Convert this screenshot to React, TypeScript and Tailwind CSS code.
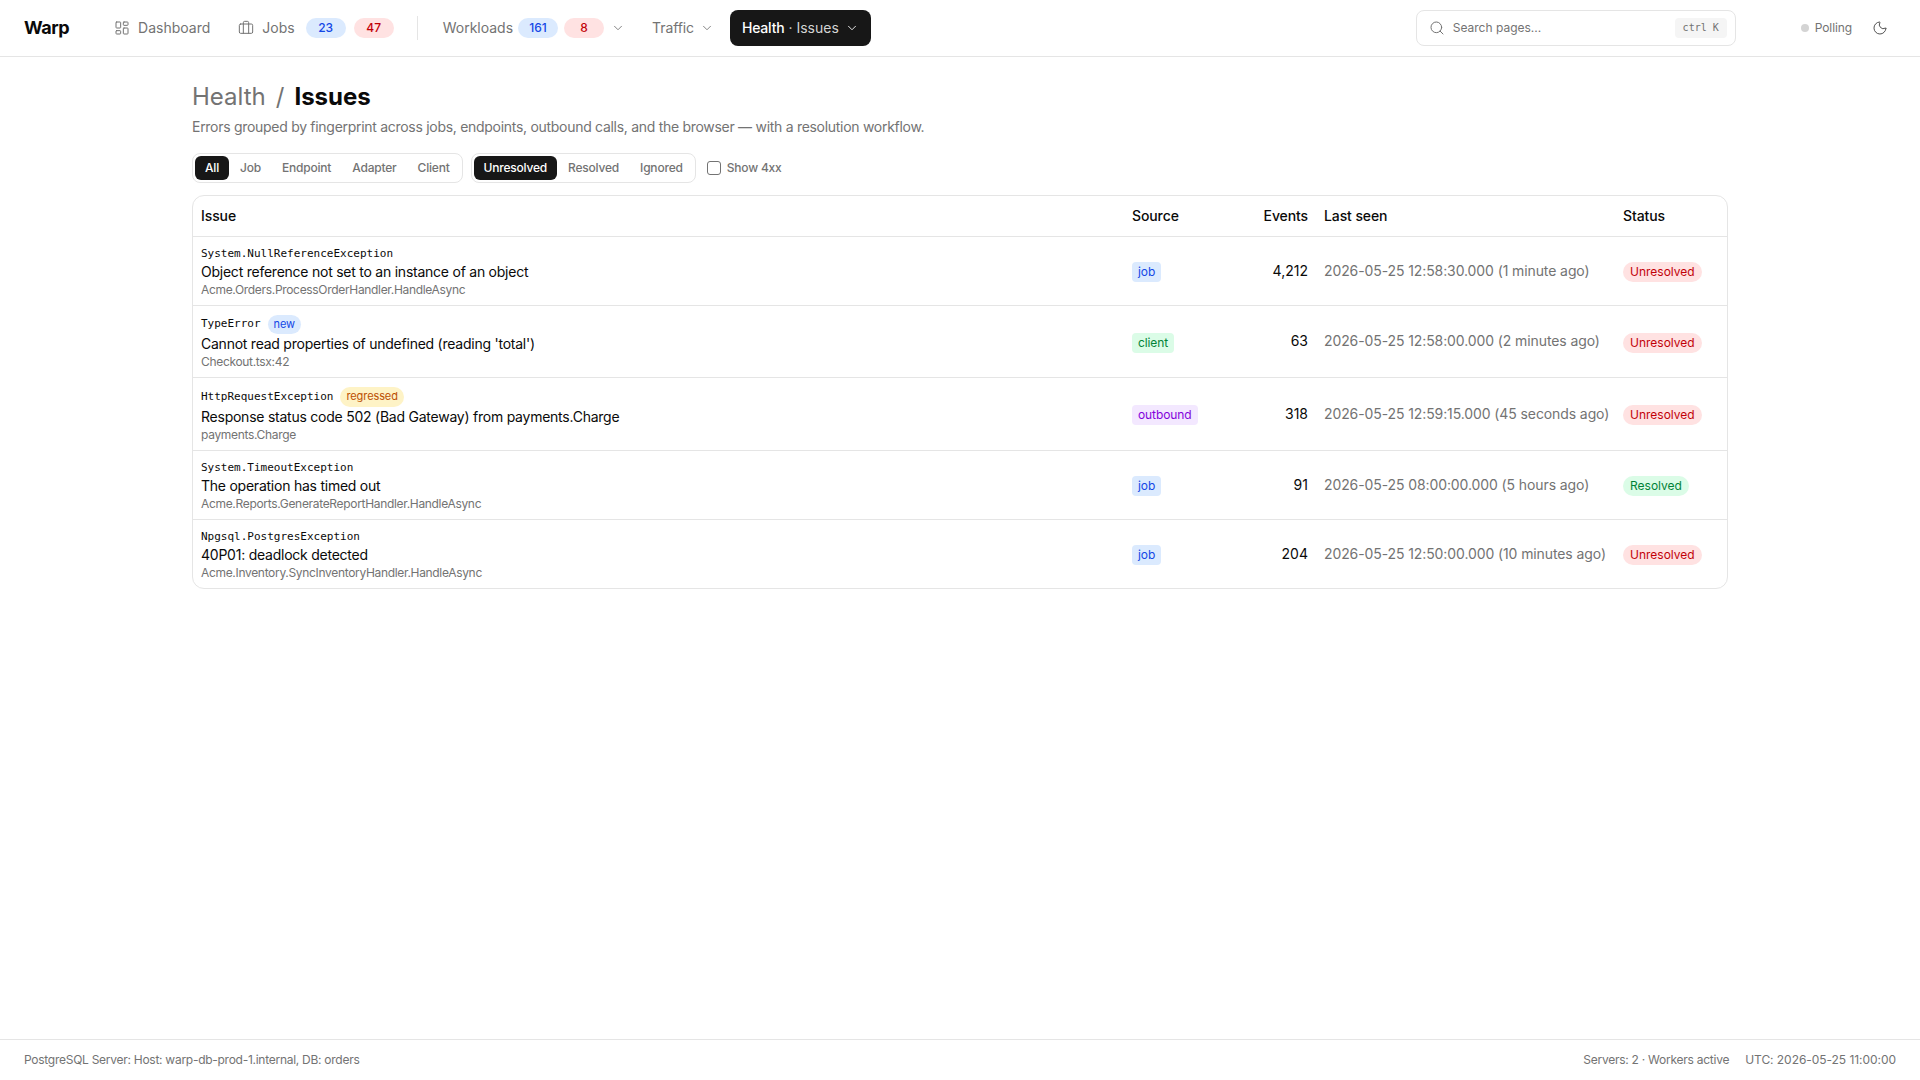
import { ChevronDown, LayoutDashboard, Briefcase, Search, Moon } from "lucide-react"

const font = "font-['Inter','Liberation_Sans',sans-serif]"
const mono = "font-['DejaVu_Sans_Mono','Liberation_Mono',monospace]"

type Issue = {
  type: string
  flag?: "new" | "regressed"
  message: string
  where: string
  source: "job" | "client" | "outbound"
  events: string
  seen: string
  status: "Unresolved" | "Resolved"
}

const issues: Issue[] = [
  {
    type: "System.NullReferenceException",
    message: "Object reference not set to an instance of an object",
    where: "Acme.Orders.ProcessOrderHandler.HandleAsync",
    source: "job",
    events: "4,212",
    seen: "2026-05-25 12:58:30.000 (1 minute ago)",
    status: "Unresolved",
  },
  {
    type: "TypeError",
    flag: "new",
    message: "Cannot read properties of undefined (reading 'total')",
    where: "Checkout.tsx:42",
    source: "client",
    events: "63",
    seen: "2026-05-25 12:58:00.000 (2 minutes ago)",
    status: "Unresolved",
  },
  {
    type: "HttpRequestException",
    flag: "regressed",
    message: "Response status code 502 (Bad Gateway) from payments.Charge",
    where: "payments.Charge",
    source: "outbound",
    events: "318",
    seen: "2026-05-25 12:59:15.000 (45 seconds ago)",
    status: "Unresolved",
  },
  {
    type: "System.TimeoutException",
    message: "The operation has timed out",
    where: "Acme.Reports.GenerateReportHandler.HandleAsync",
    source: "job",
    events: "91",
    seen: "2026-05-25 08:00:00.000 (5 hours ago)",
    status: "Resolved",
  },
  {
    type: "Npgsql.PostgresException",
    message: "40P01: deadlock detected",
    where: "Acme.Inventory.SyncInventoryHandler.HandleAsync",
    source: "job",
    events: "204",
    seen: "2026-05-25 12:50:00.000 (10 minutes ago)",
    status: "Unresolved",
  },
]

const sourceStyles = {
  job: "bg-blue-100 text-blue-700",
  client: "bg-green-100 text-green-700",
  outbound: "bg-purple-100 text-purple-700",
}

function Pill({ tone, children }: { tone: "blue" | "red"; children: string }) {
  return (
    <span
      className={`flex h-5 min-w-[40px] items-center justify-center rounded-full px-2 text-xs font-medium ${
        tone === "blue" ? "bg-blue-100 text-blue-700" : "bg-red-100 text-red-700"
      }`}
    >
      {children}
    </span>
  )
}

function Segments({ items, active }: { items: string[]; active: string }) {
  return (
    <div className="flex h-[30px] items-center gap-px rounded-lg border border-neutral-200 p-0.5">
      {items.map((item) => (
        <span
          key={item}
          className={`flex h-6 items-center rounded-md px-2.5 text-xs font-medium tracking-[-0.2px] ${
            item === active ? "bg-neutral-900 text-white" : "text-neutral-500"
          }`}
        >
          {item}
        </span>
      ))}
    </div>
  )
}

export default function App() {
  return (
    <div className={`${font} flex min-h-screen flex-col bg-white text-neutral-950`}>
      <header className="flex h-[57px] items-center border-b border-neutral-200 px-6">
        <span className="text-lg font-bold tracking-tight">Warp</span>
        <nav className="ml-[45px] flex items-center text-sm text-neutral-500">
          <span className="flex items-center gap-2">
            <LayoutDashboard className="size-4" strokeWidth={1.5} />
            Dashboard
          </span>
          <span className="ml-[28px] flex items-center gap-2">
            <Briefcase className="size-4" strokeWidth={1.5} />
            Jobs
          </span>
          <span className="ml-[11px] flex items-center gap-2">
            <Pill tone="blue">23</Pill>
            <Pill tone="red">47</Pill>
          </span>
          <span className="ml-[23px] h-6 w-px bg-neutral-200" />
          <span className="ml-[25px]">Workloads</span>
          <span className="ml-[5px] flex items-center gap-[6px]">
            <Pill tone="blue">161</Pill>
            <Pill tone="red">8</Pill>
          </span>
          <ChevronDown className="ml-[7px] size-3.5" strokeWidth={1.5} />
          <span className="ml-[27px] tracking-[-0.1px]">Traffic</span>
          <ChevronDown className="ml-1.5 size-3.5" strokeWidth={1.5} />
          <span className="ml-[16px] flex h-9 items-center rounded-lg bg-neutral-900 px-3 text-white">
            <span className="font-medium tracking-[-0.2px]">Health</span>
            <span className="ml-1 text-neutral-300">· Issues</span>
            <ChevronDown className="ml-1.5 size-3.5" strokeWidth={1.5} />
          </span>
        </nav>
        <div className="ml-auto flex h-9 w-[320px] items-center rounded-lg border border-neutral-200 pl-3 pr-2 text-xs text-neutral-500">
          <Search className="size-4" strokeWidth={1.5} />
          <span className="ml-2">Search pages...</span>
          <span className={`${mono} ml-auto flex h-5 items-center rounded bg-neutral-100 px-2 text-[10px]`}>ctrl K</span>
        </div>
        <span className="ml-[65px] flex items-center gap-1.5 text-xs tracking-[-0.1px] text-neutral-500">
          <span className="size-2 rounded-full bg-neutral-300" />
          Polling
        </span>
        <Moon className="ml-5 size-4 text-neutral-600" strokeWidth={1.5} />
        <span className="w-2" />
      </header>

      <main className="mx-auto w-[1536px] flex-1 pt-6">
        <h1 className="text-2xl leading-8">
          <span className="text-neutral-500">Health</span>
          <span className="mx-2.5 text-neutral-500">/</span>
          <span className="font-bold">Issues</span>
        </h1>
        <p className="mt-[4px] text-sm leading-5 tracking-[-0.29px] text-neutral-500">
          Errors grouped by fingerprint across jobs, endpoints, outbound calls, and the browser — with a resolution workflow.
        </p>

        <div className="mt-4 flex items-center gap-2">
          <Segments items={["All", "Job", "Endpoint", "Adapter", "Client"]} active="All" />
          <Segments items={["Unresolved", "Resolved", "Ignored"]} active="Unresolved" />
          <label className="ml-[3px] flex items-center gap-[6px] text-xs font-medium tracking-[-0.2px] text-neutral-500">
            <span className="size-[14px] rounded-[3px] border border-neutral-500" />
            Show 4xx
          </label>
        </div>

        <div className="mt-3 overflow-hidden rounded-xl border border-neutral-200">
          <table className="w-full table-fixed border-collapse">
            <colgroup>
              <col className="w-[931px]" />
              <col className="w-[116px]" />
              <col className="w-[76px]" />
              <col className="w-[299px]" />
              <col />
            </colgroup>
            <thead>
              <tr className="h-10 border-b border-neutral-200 text-left text-sm tracking-[-0.1px]">
                <th className="px-2 font-medium">Issue</th>
                <th className="px-2 font-medium">Source</th>
                <th className="px-2 text-right font-medium">Events</th>
                <th className="px-2 font-medium">Last seen</th>
                <th className="px-2 font-medium">Status</th>
              </tr>
            </thead>
            <tbody>
              {issues.map((issue) => (
                <tr key={issue.type} className="border-b border-neutral-200 last:border-b-0">
                  <td className="px-2 pb-[7px] pt-[9px]">
                    <div className="flex items-center gap-[7px]">
                      <span className={`${mono} text-[11px] leading-4`}>{issue.type}</span>
                      {issue.flag && (
                        <span
                          className={`flex items-center rounded-full px-[6px] text-[11px] tracking-[-0.1px] ${
                            issue.flag === "new" ? "h-[19px] bg-blue-100 text-blue-700" : "h-5 bg-amber-100 text-amber-700"
                          }`}
                        >
                          {issue.flag}
                        </span>
                      )}
                    </div>
                    <div className="text-sm leading-5 tracking-[-0.24px]">{issue.message}</div>
                    <div className="text-xs leading-4 tracking-[-0.32px] text-neutral-500">{issue.where}</div>
                  </td>
                  <td className="px-2">
                    <span className={`inline-flex h-5 items-center rounded px-[6px] align-middle text-xs tracking-[-0.1px] ${sourceStyles[issue.source]}`}>
                      {issue.source}
                    </span>
                  </td>
                  <td className="px-2 text-right text-sm">{issue.events}</td>
                  <td className="whitespace-nowrap px-2 text-sm tracking-[-0.1px] text-neutral-500">{issue.seen}</td>
                  <td className="px-2">
                    <span
                      className={`inline-flex h-5 items-center rounded-full px-[7px] align-middle text-xs ${
                        issue.status === "Resolved" ? "bg-green-100 text-green-700" : "bg-red-100 text-red-700"
                      }`}
                    >
                      {issue.status}
                    </span>
                  </td>
                </tr>
              ))}
            </tbody>
          </table>
        </div>
      </main>

      <footer className="flex h-[41px] items-center justify-between border-t border-neutral-200 px-6 text-xs text-neutral-500">
        <span className="tracking-[-0.27px]">PostgreSQL Server: Host: warp-db-prod-1.internal, DB: orders</span>
        <span className="flex gap-4">
          <span className="tracking-[-0.25px]">Servers: 2 · Workers active</span>
          <span className="tracking-[-0.05px]">UTC: 2026-05-25 11:00:00</span>
        </span>
      </footer>
    </div>
  )
}
